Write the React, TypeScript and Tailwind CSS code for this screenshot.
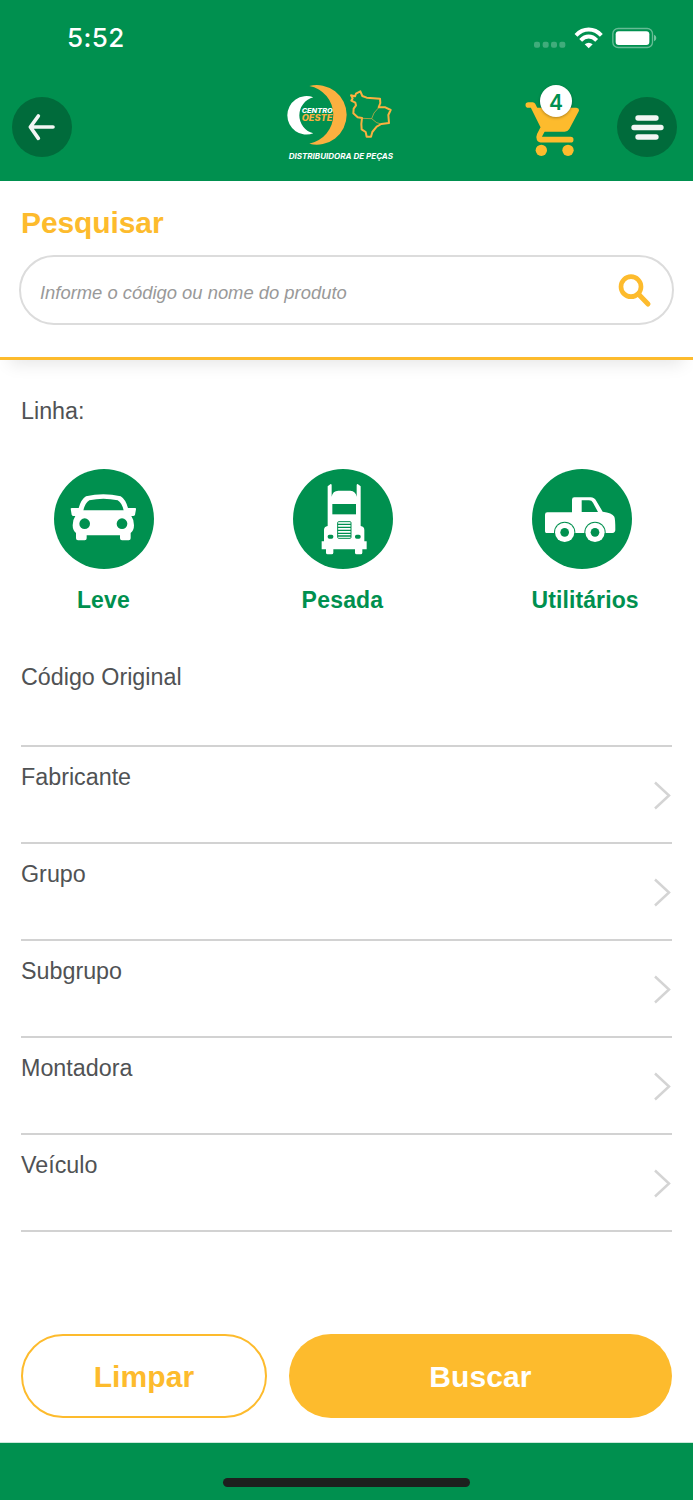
import type { ReactNode } from "react";

const FILTERS = ["Fabricante", "Grupo", "Subgrupo", "Montadora", "Veículo"];

function StatusBar() {
  return (
    <div className="flex h-[76px] items-center pl-[67px] pr-[36px]">
      <span className="font-['Inter',sans-serif] text-[26px] font-medium leading-none tracking-[0.4px] text-white">
        5:52
      </span>
      <svg className="mb-[2px] ml-auto" width="123" height="24" viewBox="0 0 369 72" fill="#fff">
        <g opacity="0.25">
          <rect x="0" y="50" width="18" height="18" rx="6" />
          <rect x="26" y="50" width="18" height="18" rx="6" />
          <rect x="51" y="50" width="18" height="18" rx="6" />
          <rect x="76" y="50" width="18" height="18" rx="6" />
        </g>
        <g fill="none" stroke="#fff" strokeWidth="12">
          <path d="M126 31 C148 8 180 8 202 31" />
          <path d="M140 46 C155 31 173 31 188 46" />
        </g>
        <path d="M152 58 Q164 48 176 58 L164 70 Z" />
        <rect x="236.5" y="10.500" width="119" height="57" rx="16" fill="none" stroke="#fff" strokeOpacity="0.4" strokeWidth="4" />
        <rect x="245" y="18.500" width="101" height="41.500" rx="9" />
        <path d="M360 29 Q367 32 367 39 Q367 46 360 49 Z" opacity="0.45" />
      </svg>
    </div>
  );
}

function Logo() {
  return (
    <svg width="140" height="95" viewBox="0 0 420 285">
      <path d="M118 33 A89.4 89.4 0 1 1 118 206 A88 88 0 0 0 118 33 Z" fill="#fbb040" />
      <path d="M130 67 A57.7 57.7 0 1 0 130 175 A55.7 55.7 0 0 1 130 67 Z" fill="#fff" />
      <g fontFamily="Inter, sans-serif" fontStyle="italic">
        <text x="95" y="115" fontSize="20.500" fontWeight="800" fill="#fff" textLength="93" lengthAdjust="spacingAndGlyphs">
          CENTRO
        </text>
        <text x="95" y="138" fontSize="25" fontWeight="800" fill="#fbb040" textLength="92" lengthAdjust="spacingAndGlyphs">
          OESTE
        </text>
        <text x="56" y="253" fontSize="23" fontWeight="700" fill="#fff" textLength="313" lengthAdjust="spacingAndGlyphs">
          DISTRIBUIDORA DE PEÇAS
        </text>
      </g>
      <g fill="none" stroke="#fbb040" strokeLinejoin="round">
        <path
          strokeWidth="6"
          d="M243 61 L255 64 L258 56 L271 49 L277 63 L290 68 L330 71 L331 84 L326 97 L346 97 L362 105 L355 120 L357 144 L334 147 L320 155 L307 171 L303 185 L290 185 L287 171 L275 163 L274 147 L276 129 L263 127 L250 115 L251 101 L258 91 L256 83 L244 77 L248 70 Z"
        />
        <path strokeWidth="2.500" strokeOpacity="0.75" d="M276 130 L305 131 L312 114 L326 98 M305 131 L320 143 L334 147" />
      </g>
    </svg>
  );
}

function Cart() {
  return (
    <div className="relative h-[76px] w-[55px]">
      <svg className="absolute left-0 top-0" width="55" height="76" viewBox="0 0 165 228" fill="#fdbb2d">
        <path
          d="M10 60 H23 L56 127 L44 150 Q38 164 52 164 H137"
          fill="none"
          stroke="#fdbb2d"
          strokeWidth="17"
          strokeLinecap="round"
          strokeLinejoin="round"
        />
        <path d="M33 68 H154 Q166 70 160 81 L133 132 Q128 140 119 140 H54 Z" />
        <circle cx="49" cy="196" r="17" />
        <circle cx="129" cy="196" r="17" />
      </svg>
      <span className="absolute left-[15px] top-0 flex size-[32px] items-center justify-center rounded-full bg-white pt-[2px] font-['Inter',sans-serif] text-[21px] font-semibold leading-none text-[#00904f] shadow-[0_1px_3px_rgba(0,0,0,0.3)]">
        4
      </span>
    </div>
  );
}

function RoundButton({ label, children }: { label: string; children: ReactNode }) {
  return (
    <button aria-label={label} className="flex size-[60px] items-center justify-center rounded-full bg-[#006b3b]">
      {children}
    </button>
  );
}

function CarIcon() {
  return (
    <svg width="100" height="100" viewBox="0 0 300 300" fill="#fff">
      <path d="M50 119 Q50 117 54 117 H74 Q82 90 96 82 Q148 69 200 82 Q214 90 222 117 H243 Q247 117 246 121 L243 137 Q242 141 237 141 H232 Q240 152 240 169 Q240 184 230 192 V208 Q230 214 224 214 H204 Q198 214 198 208 V199 H98 V208 Q98 214 92 214 H72 Q66 214 66 208 V192 Q56 184 56 169 Q56 152 64 141 H59 Q54 141 53 137 Z" />
      <path d="M88 124 Q94 101 106 94 Q148 85 191 94 Q203 101 209 124 Z" fill="#00904f" />
      <circle cx="92" cy="164" r="16" fill="#00904f" />
      <circle cx="204" cy="164" r="16" fill="#00904f" />
    </svg>
  );
}

function TruckIcon() {
  return (
    <svg width="100" height="100" viewBox="0 0 300 300" fill="#fff">
      <path d="M104 52 L113 45 Q116 45 116 49 V83 Q119 65 136 65 H172 Q188 66 191 83 V49 Q191 45 194 45 L203 52 V171 Q214 173 214 183 V217 H221 V241 H208 V251 Q208 256 203 256 H191 Q186 256 186 251 V241 H121 V251 Q121 256 116 256 H104 Q99 256 99 251 V241 H86 V217 H93 V183 Q93 173 104 171 Z" />
      <path d="M118 105 H189 V136 H118 Z" fill="#00904f" />
      <rect x="104" y="197" width="17" height="12" rx="5" fill="#00904f" />
      <rect x="186" y="197" width="17" height="12" rx="5" fill="#00904f" />
      <rect x="134" y="158" width="40" height="50" rx="3" fill="none" stroke="#00904f" strokeWidth="3" />
      <path d="M134 166 H174 M134 175 H174 M134 184 H174 M134 193 H174 M134 201 H174" stroke="#00904f" strokeWidth="4" />
    </svg>
  );
}

function PickupIcon() {
  return (
    <svg width="100" height="100" viewBox="0 0 300 300" fill="#fff">
      <path d="M46 130 H120 V92 Q120 85 127 85 H176 Q187 85 193 96 L212 128 Q240 131 247 143 Q250 150 250 182 Q250 190 241 192 H43 Q39 192 39 187 V137 Q39 130 46 130 Z" />
      <path d="M149 94 H171 Q179 94 183 101 L198 129 H149 Z" fill="#00904f" />
      <circle cx="98" cy="190" r="32" fill="#00904f" />
      <circle cx="189" cy="190" r="32" fill="#00904f" />
      <circle cx="98" cy="190" r="29" />
      <circle cx="189" cy="190" r="29" />
      <circle cx="98" cy="190" r="13" fill="#00904f" />
      <circle cx="189" cy="190" r="13" fill="#00904f" />
    </svg>
  );
}

function VehicleLine({ label, children }: { label: string; children: ReactNode }) {
  return (
    <button className="flex w-[100px] flex-col items-center">
      <span className="size-[100px] rounded-full bg-[#00904f]">{children}</span>
      <span className="mt-[17px] min-w-full whitespace-nowrap text-center text-[23px] font-bold leading-[28px] tracking-[0.200px] text-[#00904f]">
        {label}
      </span>
    </button>
  );
}

export default function App() {
  return (
    <div className="flex h-[1500px] w-[693px] flex-col overflow-hidden bg-white font-['Liberation_Sans',Arial,sans-serif] text-[#505254]">
      <header className="h-[181px] shrink-0 bg-[#00904f]">
        <StatusBar />
        <div className="flex items-start pl-[12px]">
          <div className="pt-[21px]">
            <RoundButton label="Voltar">
              <svg width="60" height="60" viewBox="0 0 180 180" fill="none" stroke="#f2f6f4" strokeWidth="11" strokeLinecap="round" strokeLinejoin="round">
                <path d="M123 90 H56 M79 57 L55 90 L79 124" />
              </svg>
            </RoundButton>
          </div>
          <div className="-mt-px ml-[198px]">
            <Logo />
          </div>
          <div className="ml-[115px] pt-[9px]">
            <Cart />
          </div>
          <div className="ml-[37px] pt-[21px]">
            <RoundButton label="Menu">
              <svg width="60" height="60" viewBox="0 0 180 180" stroke="#f2f6f4" strokeWidth="16" strokeLinecap="round">
                <path d="M63 63 H117 M51 91.500 H132 M63 120 H117" />
              </svg>
            </RoundButton>
          </div>
        </div>
      </header>

      <section className="flex h-[179px] shrink-0 flex-col border-b-[3px] border-[#fdbb2d] pl-[19px] pr-[19px] pt-[24px] shadow-[0_14px_16px_-10px_rgba(0,0,0,0.1)]">
        <h1 className="pl-[2px] text-[30px] font-bold leading-[36px] tracking-[-0.100px] text-[#fdbb2d]">Pesquisar</h1>
        <div className="mt-[14px] flex h-[70px] items-center rounded-full border-2 border-[#dcdcdc] pl-[19px] pr-[19px]">
          <span className="pt-[6px] text-[18.400px] italic leading-[24px] text-[#999]">Informe o código ou nome do produto</span>
          <svg className="ml-auto" width="36" height="36" viewBox="0 0 108 108" fill="none" stroke="#fdbb2d" strokeWidth="14">
            <circle cx="42" cy="44" r="30" />
            <path d="M64 66 L93 96" strokeLinecap="round" strokeWidth="15" />
          </svg>
        </div>
      </section>

      <main className="flex grow flex-col px-[21px]">
        <h2 className="mt-[37px] text-[23.300px] leading-[28px]">Linha:</h2>
        <div className="mt-[44px] flex gap-[139px] pl-[32.500px]">
          <VehicleLine label="Leve"><CarIcon /></VehicleLine>
          <VehicleLine label="Pesada"><TruckIcon /></VehicleLine>
          <button className="flex w-[107px] flex-col items-start">
            <span className="size-[100px] rounded-full bg-[#00904f]"><PickupIcon /></span>
            <span className="mt-[17px] whitespace-nowrap text-[23px] font-bold leading-[28px] tracking-[0.100px] text-[#00904f]">
              Utilitários
            </span>
          </button>
        </div>

        <div className="mt-[49px] h-[84px] border-b-2 border-[#d2d2d2] text-[23.300px] leading-[28px]">Código Original</div>
        {FILTERS.map((label) => (
          <button key={label} className="flex h-[97px] items-start justify-between border-b-2 border-[#d2d2d2] pt-[16px] text-left">
            <span className="text-[23.300px] leading-[28px]">{label}</span>
            <svg className="mt-[17px]" width="20" height="30" viewBox="0 0 20 30" fill="none" stroke="#d4d4d4" strokeWidth="2.500">
              <path d="M3 2.500 L17 15.500 L3 28.500" />
            </svg>
          </button>
        ))}

        <div className="mt-[102px] flex gap-[22px]">
          <button className="h-[84px] w-[246px] rounded-full border-2 border-[#fdbb2d] text-[30px] font-bold tracking-[0.100px] text-[#fdbb2d]">
            Limpar
          </button>
          <button className="h-[84px] w-[383px] rounded-full bg-[#fdbb2d] text-[30px] font-bold tracking-[0.100px] text-white">
            Buscar
          </button>
        </div>
      </main>

      <footer className="flex h-[58px] shrink-0 justify-center border-t border-[#cbe8db] bg-[#00904f] pt-[35px]">
        <div className="h-[9px] w-[247px] rounded-full bg-[#1d201e]" />
      </footer>
    </div>
  );
}
